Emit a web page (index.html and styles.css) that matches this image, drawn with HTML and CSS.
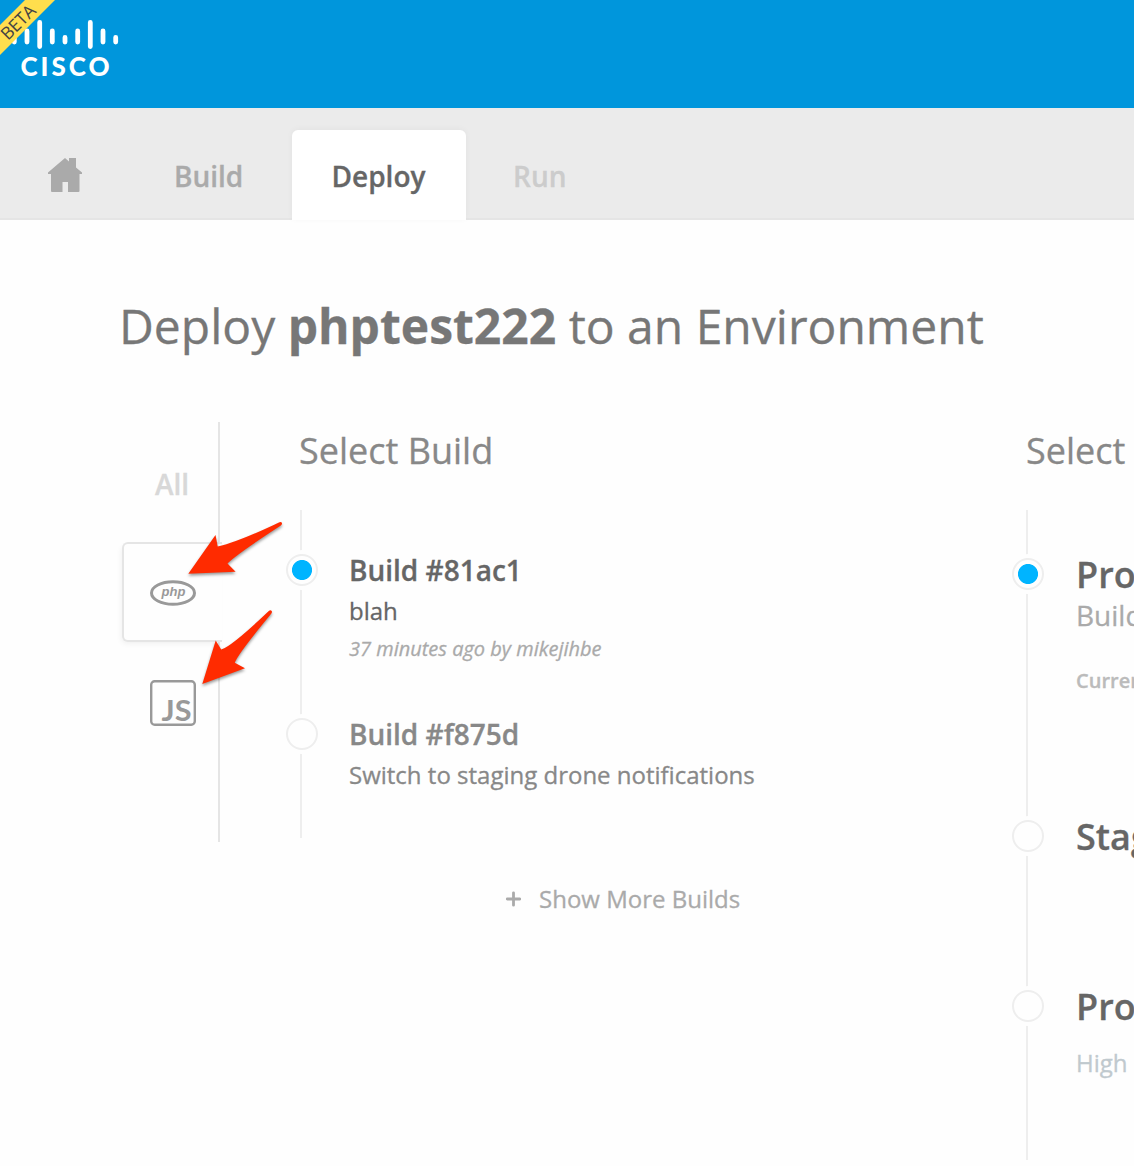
FILE: index.html
```
<!DOCTYPE html>
<html lang="en">
<head>
<meta charset="utf-8">
<title>Deploy phptest222</title>
<link rel="stylesheet" href="styles.css">
</head>
<body>
<header class="topbar">
  <svg class="logo" width="140" height="108" viewBox="0 0 140 108" role="img" aria-label="Cisco">
    <g stroke="#fff" stroke-width="4.8" stroke-linecap="round">
      <path d="M14.3 37.4V42M27 31V42M39.7 22.4V46.6M52.3 31V42M65 37.4V42M77.7 31V42M90.3 22.4V46.6M103 31V42M115.7 37.4V42"/>
    </g>
    <text class="logo-text" x="20.5" y="75.6" textLength="89" lengthAdjust="spacing">CISCO</text>
    <path class="ribbon" d="M25 0H55L0 55V25Z"/>
    <text class="ribbon-text" transform="translate(8 41) rotate(-45)" textLength="41">BETA</text>
  </svg>
</header>
<nav class="tabs">
  <a class="tab tab-home" aria-label="Home">
    <svg width="34" height="34" viewBox="0 0 34 34"><path d="M17 0L21 3.4V0H28V9.5L34 14.5V16H31.5V33Q31.5 34 30.5 34H20V24H14.5V34H4Q3 34 3 33V16H0V14.5Z" fill="#aaa"/></svg>
  </a>
  <a class="tab tab-build">Build</a>
  <a class="tab tab-active">Deploy</a>
  <a class="tab tab-run">Run</a>
</nav>
<main class="page">
  <h1 class="title">Deploy <strong>phptest222</strong> to an Environment</h1>
  <div class="columns">
    <aside class="filters">
      <a class="filter-all">All</a>
      <a class="filter-php" aria-label="PHP">
        <svg width="46" height="26" viewBox="0 0 46 26"><ellipse cx="23" cy="13" rx="21.5" ry="11.3" fill="none" stroke="#999" stroke-width="3"/><text class="php-text" x="11.5" y="16" textLength="24">php</text></svg>
      </a>
      <a class="filter-js" aria-label="JavaScript">
        <svg width="46" height="46" viewBox="0 0 46 46"><rect x="1.2" y="1.2" width="43.6" height="43.6" rx="3.5" fill="none" stroke="#999" stroke-width="2.4"/><text class="js-text" x="11.5" y="40.5" textLength="30" lengthAdjust="spacingAndGlyphs">JS</text></svg>
      </a>
      <svg class="arrows" width="110" height="180" viewBox="180 515 110 180">
        <path d="M188.3 573.7L215.5 535L217.7 546.5Q238 542 279.5 522.2Q281.5 521.3 282 523.2Q282.2 524.8 280.5 525.8Q237 554 227.5 563.5L235.6 571.8Z"/>
        <path d="M202.3 684L215.7 640.5L221.2 649.6Q232 646 268.8 611Q270.5 609.3 271.7 611Q272.4 612.2 271.2 613.7Q237 655 234.8 662.8L245 668.2Z"/>
      </svg>
    </aside>
    <section class="builds">
      <h2 class="heading heading-builds">Select Build</h2>
      <ol class="timeline">
        <li class="build build-selected">
          <span class="dot dot-on"></span>
          <h3 class="build-name">Build #81ac1</h3>
          <p class="build-note">blah</p>
          <p class="build-meta">37 minutes ago by mikejihbe</p>
        </li>
        <li class="build">
          <span class="dot"></span>
          <h3 class="build-name">Build #f875d</h3>
          <p class="build-note">Switch to staging drone notifications</p>
        </li>
      </ol>
      <a class="more"><svg width="16" height="18" viewBox="0 0 16 18"><path d="M8.5 3.8V16.200M2.300 10H14.700" stroke="#aaa" stroke-width="2.8" stroke-linecap="round"/></svg><span>Show More Builds</span></a>
    </section>
    <section class="targets">
      <h2 class="heading">Select</h2>
      <ol class="timeline timeline-targets">
        <li class="target target-first">
          <span class="dot dot-on"></span>
          <h3 class="target-name">Product</h3>
          <p class="target-build">Build</p>
          <p class="target-current">Current</p>
        </li>
        <li class="target">
          <span class="dot"></span>
          <h3 class="target-name">Staging</h3>
        </li>
        <li class="target">
          <span class="dot"></span>
          <h3 class="target-name">Product</h3>
          <p class="target-note">High</p>
        </li>
      </ol>
    </section>
  </div>
</main>
</body>
</html>
```
FILE: styles.css
```
* { box-sizing: border-box; }
html { overflow: hidden; }
body {
  margin: 0;
  height: 1166px;
  overflow: hidden;
  background: #fefefe;
  color: #666;
  font-family: "Open Sans", "Noto Sans", sans-serif;
  -webkit-text-stroke: .3px;
}
h1, h2, h3, p, ol { margin: 0; padding: 0; }
ol { list-style: none; }
svg { display: block; }
svg text { -webkit-text-stroke: 0; }

.topbar { height: 108px; background: #0096dc; }
.logo-text { font: 900 26px Lato, sans-serif; fill: #fff; }
.ribbon { fill: #ffde4d; }
.ribbon-text { font: 500 17.5px "Open Sans", sans-serif; fill: #444; }

.tabs {
  display: flex;
  height: 112px;
  padding-top: 22px;
  background: linear-gradient(#e5e5e5, #e5e5e5) 0 100% / 100% 2px no-repeat #ebebeb;
}
.tab { height: 90px; font-size: 28px; font-weight: 600; line-height: 92px; }
.tab-home { width: 174px; padding: 28px 0 0 48px; }
.tab-build { width: 118px; color: #aaa; }
.tab-active {
  width: 174px;
  padding-right: 1px;
  text-align: center;
  color: #666;
  background: #fff;
  border-radius: 6px 6px 0 0;
  box-shadow: 0 -1px 6px rgba(0, 0, 0, .04);
}
.tab-run { padding-left: 47px; color: #ccc; }

.page { padding: 72px 0 0 120px; }
.title {
  height: 130px;
  margin-left: -1px;
  font-size: 48px;
  font-weight: 400;
  line-height: 68px;
  color: #777;
  white-space: nowrap;
}
.columns { display: flex; width: 1014px; }

.filters {
  position: relative;
  width: 100px;
  height: 420px;
  border-right: 2px solid #e5e5e5;
  flex: none;
}
.filter-all {
  display: block;
  height: 120px;
  padding: 41px 0 0 35px;
  font-size: 28px;
  font-weight: 600;
  line-height: 42px;
  color: #d8d8d8;
}
.filter-php {
  display: block;
  width: 100px;
  height: 100px;
  margin-left: 2px;
  padding: 36px 0 0 26px;
  border: 2px solid #e5e5e5;
  border-right: 0;
  border-radius: 6px 0 0 6px;
  background: #fefefe;
  box-shadow: -2px 3px 6px -2px rgba(0, 0, 0, .07);
}
.filter-js { display: block; padding: 38px 0 0 30px; }
.php-text { font: italic 700 13px "Liberation Sans", sans-serif; fill: #999; }
.js-text { font: 700 29px Lato, sans-serif; fill: #999; }
.arrows {
  position: absolute;
  left: 60px;
  top: 93px;
  fill: #ff2b00;
  filter: drop-shadow(0 2px 1.5px rgba(0, 0, 0, .4));
}

.builds { width: 726px; padding-left: 80px; flex: none; }
.heading {
  height: 88px;
  padding-top: 4px;
  font-size: 36px;
  font-weight: 400;
  line-height: 49px;
  color: #888;
  white-space: nowrap;
}
.heading-builds { margin-left: -1px; }
.timeline { height: 328px; border-left: 2px solid #eee; padding-top: 39px; }
.build {
  display: grid;
  grid-template-columns: 47px 1fr;
  grid-template-rows: 41px 42px 34px;
  height: 164px;
}
.build > *, .target > * { grid-column: 2; white-space: nowrap; }
.build > .dot, .target > .dot { grid-column: 1; grid-row: 1; }
.dot {
  width: 32px;
  height: 32px;
  margin: 5px 0 0 -16px;
  border: 2px solid #eee;
  border-radius: 50%;
  background: #fefefe;
  box-shadow: 0 0 0 4px #fefefe;
}
.dot-on { background: radial-gradient(circle, #00b4ff 9.6px, #fefefe 10.4px); }
.build-name { grid-row: 1; font-size: 28px; font-weight: 600; line-height: 42px; color: #888; }
.build-note { font-size: 24px; line-height: 42px; color: #888; }
.build-meta { font-size: 20px; font-style: italic; line-height: 34px; color: #aaa; }
.build-selected .build-name, .build-selected .build-note { color: #666; }
.more {
  display: flex;
  align-items: center;
  gap: 18px;
  height: 40px;
  margin: 40px 0 0 205px;
  font-size: 24px;
  color: #aaa;
}

.targets { width: 188px; padding-left: 80px; flex: none; }
.timeline-targets { height: 650px; padding-top: 43px; }
.target {
  display: grid;
  grid-template-columns: 48px 1fr;
  grid-template-rows: 43px 40px 90px;
  height: 170px;
}
.target-first { height: 262px; }
.target-name { grid-row: 1; font-size: 36px; font-weight: 600; line-height: 44px; }
.target-build { font-size: 28px; line-height: 38px; color: #aaa; }
.target-current { font-size: 20px; font-weight: 600; line-height: 90px; color: #bbb; }
.target-note { grid-row: 2 / 4; font-size: 24px; line-height: 70px; color: #c0c9ce; }
```
